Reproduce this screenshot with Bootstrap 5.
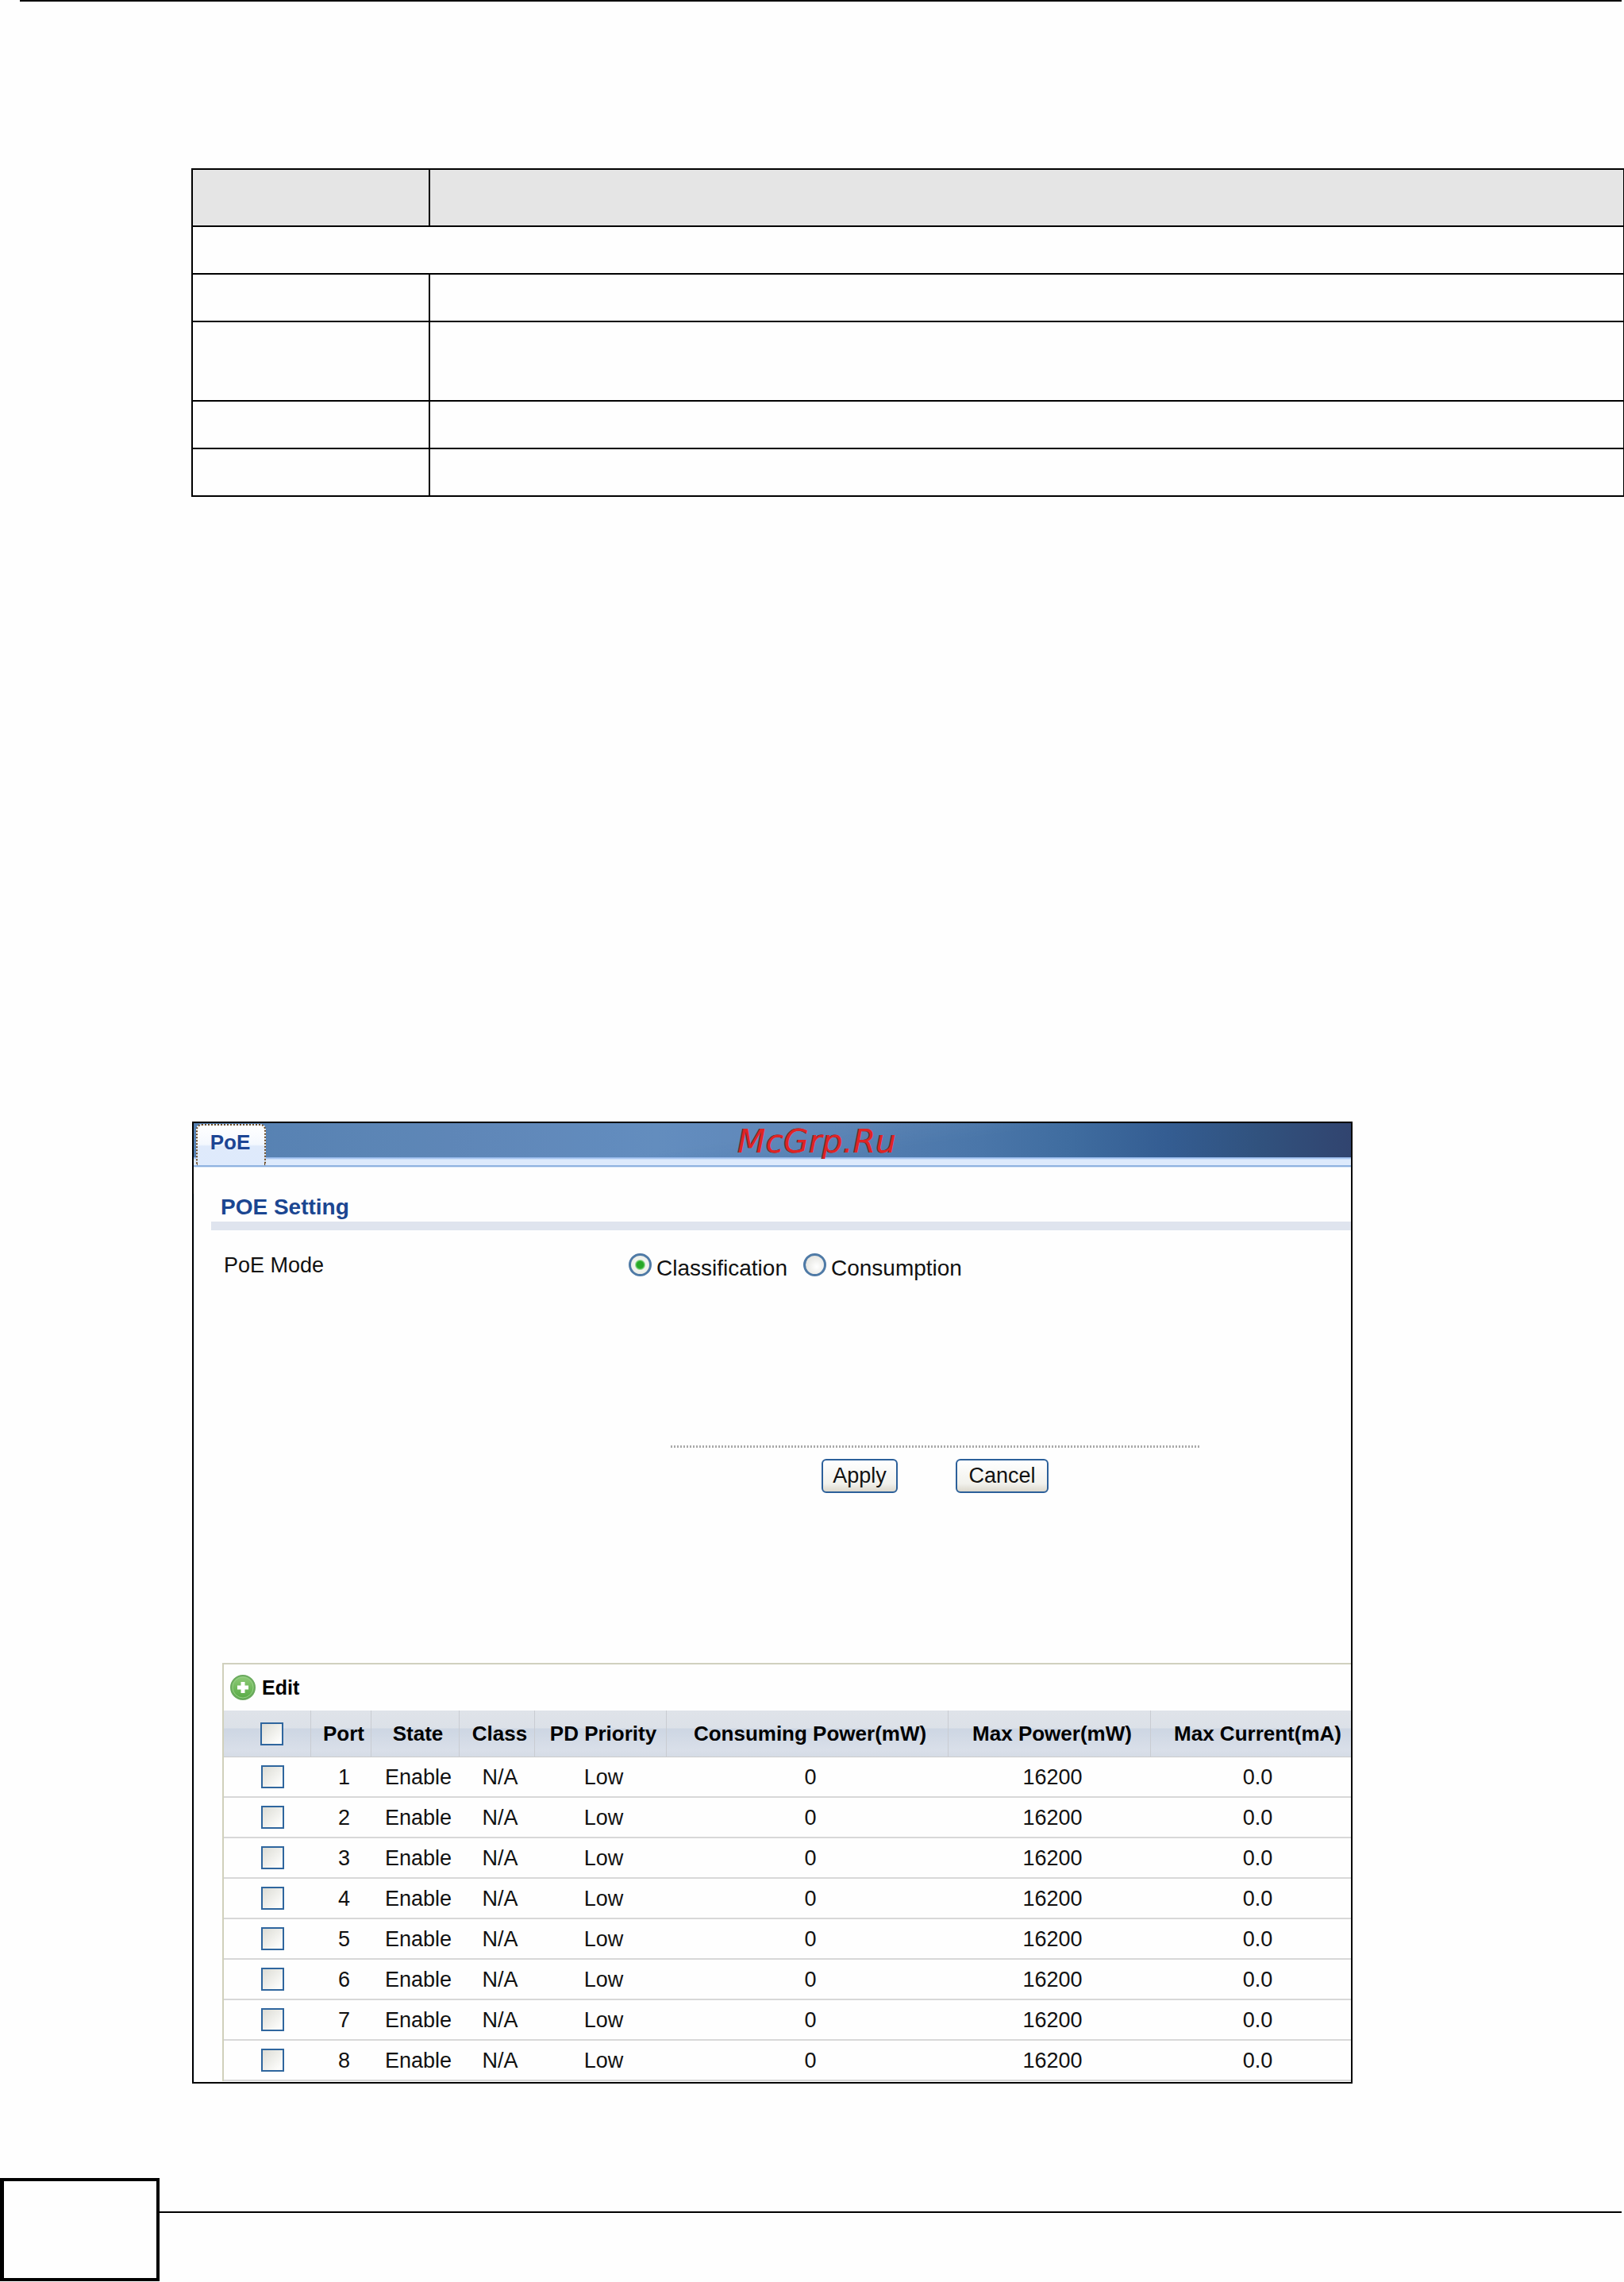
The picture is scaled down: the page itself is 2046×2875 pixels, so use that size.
<!DOCTYPE html>
<html lang="en">
<head>
<meta charset="utf-8">
<meta name="viewport" content="width=device-width, initial-scale=1">
<title>PoE</title>
<link href="https://cdn.jsdelivr.net/npm/bootstrap@5.3.0/dist/css/bootstrap.min.css" rel="stylesheet">
<style>
  body { background: #fefefe; color: #111; font-family: "Liberation Sans", Arial, sans-serif; font-size: 27px; line-height: 32px; overflow-x: hidden; }
  .page-rule { height: 2px; background: #000; margin: 0 3px 0 25px; }

  .sheet { padding-left: 241px; }
  .desc-table { border-collapse: separate; border-spacing: 0; table-layout: fixed; border-left: 2px solid #000; border-right: 1px solid #000; border-top: 2px solid #000; margin: 210px 0 787px; }
  .desc-table td, .desc-table th { padding: 0; height: 60px; border-bottom: 2px solid #000; }
  .desc-table th { height: 72px; background: #e5e5e5; }
  .desc-table .split { border-right: 2px solid #000; }
  .desc-table .tall td { height: 100px; }
  .desc-table col:first-child { width: 299px; }

  .panel { width: 81%; margin-left: 1px; border: 2px solid #000; overflow: hidden; }
  .panel-top {
    height: 56px; padding: 1px 0 0 3px; color: #1d4594;
    background:
      linear-gradient(180deg, transparent 43px, #8db2e8 43px, #b5d0f5 45px, #ddeafc 46px, #ddeafc 53px, #8fb3e0 53px, #8fb3e0 55px, #dce8f7 55px),
      linear-gradient(172deg, rgba(255,255,255,.05) 0 45%, transparent 60%),
      linear-gradient(90deg, #4c79ad 0, #5580b3 22%, #5b87bb 40%, #557fb2 56%, #4a76a9 68%, #3f6c9f 76%, #345d92 84%, #31527e 92%, #31446f 100%);
  }
  .tab-link { height: 52px; width: 88px; padding-right: 2px; border: 2px dotted #6b4a24; border-bottom: 0; border-radius: 7px 7px 0 0; background: linear-gradient(180deg, #fff 0, #f4f8fe 48%, #dfeafb 52%, #deeafc 100%); color: #1d4594; font-size: 26px; line-height: 42px; font-weight: 700; }
  .watermark { left: 47%; top: -2px; color: #df2424; font: italic 41px/50px "DejaVu Sans", sans-serif; text-shadow: -1px 0 0 #5a3040; }
  .panel-body { border-left: 1px solid #dce6f6; padding: 0 0 1px 21px; }
  .section-title { margin: 33px 0 28px; padding: 0 0 1px 12px; border-bottom: 11px solid #dfe4ee; color: #1b4691; font-size: 28px; line-height: 34px; font-weight: 700; }
  .mode-row { padding-left: 16px; min-height: 36px; }
  .mode-name { width: 510px; }
  .mode-choice { gap: 6px; font-size: 28px; }
  .mode-choice label { padding-top: 4px; }
  .mode-list { gap: 20px; }
  .xp-radio { width: 29px; height: 29px; margin: 1px 0 0; border: 3px solid #4f7aa6; background: radial-gradient(circle at 60% 60%, #fff, #dcdcd6); flex: none; }
  .xp-radio:checked { background: radial-gradient(circle, #27a827 0 4px, #4cc04c 5px, #f3f5f0 7px, #e6e7e0 100%); border-color: #4f7aa6; }
  .actions { width: 666px; margin: 207px 0 214px 579px; }
  .dot-line { height: 3px; background: repeating-linear-gradient(90deg, #aaa 0 2px, transparent 2px 4px); }
  .action-buttons { gap: 73px; padding-top: 14px; }
  .xp-btn { height: 43px; padding: 0; border: 2px solid #2c609a; border-radius: 6px; background: linear-gradient(180deg, #fff, #f1f1ec 75%, #dcd8cc); color: #111; font-size: 27px; line-height: 39px; }
  .btn-apply { width: 96px; }
  .btn-cancel { width: 117px; }

  .grid-box { margin-left: 14px; border-top: 2px solid #d0d0bf; border-left: 2px solid #d0d0bb; }
  .tool-row { height: 58px; padding-left: 8px; }
  .edit-btn { gap: 8px; background: none; border: 0; padding: 0; font-size: 25px; line-height: 32px; font-weight: 700; color: #000; }
  .port-table { table-layout: fixed; text-align: center; color: #111; border-collapse: separate; border-spacing: 0; }
  .port-table th { height: 59px; padding: 0 0 0 7px; color: #000; font-size: 26px; line-height: 32px; white-space: nowrap; vertical-align: middle; border-right: 1px solid #c9ccd2; border-bottom: 1px solid #ccc;
    background: linear-gradient(180deg, #dfe3e9 0, #dce1e8 22px, #cdd6e3 23px, #d9dfe9 50px, #d5dce6 100%); }
  .port-table td { height: 51px; padding: 0 0 0 7px; border-bottom: 2px solid #d8d8d8; vertical-align: middle; }
  .port-table th:last-child { border-right: 0; }
  .port-table tr > :last-child { padding-left: 17px; }
  .port-table tr > :first-child { padding-left: 12px; }
  .c-check { width: 110px; } .c-port { width: 76px; } .c-state { width: 111px; } .c-class { width: 95px; }
  .c-prio { width: 166px; } .c-cons { width: 355px; } .c-max { width: 255px; }
  .xp-check.form-check-input { display: block; width: 29px; height: 29px; margin: 0 auto; border: 2px solid #2f669e; border-radius: 0; background: linear-gradient(135deg, #dcdcd5, #fcfcfa 85%); }

  .foot-box { width: 201px; height: 130px; border: 4px solid #000; border-left-width: 5px; }
  .foot-line { height: 2px; background: #000; margin: 42px 3px 0 0; }
  .foot { margin-top: 119px; }
</style>
<script src="https://cdn.jsdelivr.net/npm/bootstrap@5.3.0/dist/js/bootstrap.bundle.min.js"></script>
</head>
<body>
<div class="page-rule"></div>
<main class="sheet">
  <table class="desc-table w-100">
    <colgroup><col><col></colgroup>
    <thead><tr><th class="split"></th><th></th></tr></thead>
    <tbody>
      <tr><td colspan="2"></td></tr>
      <tr><td class="split"></td><td></td></tr>
      <tr class="tall"><td class="split"></td><td></td></tr>
      <tr><td class="split"></td><td></td></tr>
      <tr><td class="split"></td><td></td></tr>
    </tbody>
  </table>

  <section class="panel">
    <div class="panel-top position-relative d-flex align-items-start">
      <a class="tab-link d-block text-center text-decoration-none" href="#poe">PoE</a>
      <span class="watermark position-absolute">McGrp.Ru</span>
    </div>
    <div class="panel-body" id="poe">
      <h1 class="section-title">POE Setting</h1>
      <div class="mode-row d-flex align-items-start" role="radiogroup" aria-labelledby="mode-name">
        <span class="mode-name" id="mode-name">PoE Mode</span>
        <div class="mode-list d-flex">
          <div class="mode-choice d-flex align-items-start">
            <input class="form-check-input xp-radio" type="radio" name="mode" id="m1" checked><label for="m1">Classification</label>
          </div>
          <div class="mode-choice d-flex align-items-start">
            <input class="form-check-input xp-radio" type="radio" name="mode" id="m2"><label for="m2">Consumption</label>
          </div>
        </div>
      </div>
      <div class="actions">
        <div class="dot-line"></div>
        <div class="action-buttons d-flex justify-content-center">
          <button type="button" class="btn xp-btn btn-apply">Apply</button>
          <button type="button" class="btn xp-btn btn-cancel">Cancel</button>
        </div>
      </div>
      <div class="grid-box">
        <div class="tool-row d-flex align-items-center">
          <button type="button" class="edit-btn d-flex align-items-center">
            <svg width="32" height="32" viewBox="0 0 32 32" aria-hidden="true">
              <defs><linearGradient id="g" x1="0" y1="0" x2="0" y2="1"><stop offset="0" stop-color="#8fcb78"/><stop offset="1" stop-color="#56a944"/></linearGradient></defs>
              <circle cx="16" cy="16" r="15" fill="url(#g)" stroke="#6aa95e" stroke-width="2"/>
              <circle cx="16" cy="16" r="13" fill="none" stroke="#96cf86" stroke-width="1"/>
              <path d="M13.500 9h5v4.500h4.500v5h-4.500v4.500h-5v-4.500h-4.500v-5h4.500z" fill="#fff"/>
            </svg>
            Edit
          </button>
        </div>
        <table class="port-table w-100">
          <colgroup><col class="c-check"><col class="c-port"><col class="c-state"><col class="c-class"><col class="c-prio"><col class="c-cons"><col class="c-max"><col></colgroup>
          <thead>
            <tr><th><input class="form-check-input xp-check" type="checkbox" aria-label="All ports"></th><th>Port</th><th>State</th><th>Class</th><th>PD Priority</th><th>Consuming Power(mW)</th><th>Max Power(mW)</th><th>Max Current(mA)</th></tr>
          </thead>
          <tbody>
            <tr><td><input class="form-check-input xp-check" type="checkbox" aria-label="Port 1"></td><td>1</td><td>Enable</td><td>N/A</td><td>Low</td><td>0</td><td>16200</td><td>0.0</td></tr>
            <tr><td><input class="form-check-input xp-check" type="checkbox" aria-label="Port 2"></td><td>2</td><td>Enable</td><td>N/A</td><td>Low</td><td>0</td><td>16200</td><td>0.0</td></tr>
            <tr><td><input class="form-check-input xp-check" type="checkbox" aria-label="Port 3"></td><td>3</td><td>Enable</td><td>N/A</td><td>Low</td><td>0</td><td>16200</td><td>0.0</td></tr>
            <tr><td><input class="form-check-input xp-check" type="checkbox" aria-label="Port 4"></td><td>4</td><td>Enable</td><td>N/A</td><td>Low</td><td>0</td><td>16200</td><td>0.0</td></tr>
            <tr><td><input class="form-check-input xp-check" type="checkbox" aria-label="Port 5"></td><td>5</td><td>Enable</td><td>N/A</td><td>Low</td><td>0</td><td>16200</td><td>0.0</td></tr>
            <tr><td><input class="form-check-input xp-check" type="checkbox" aria-label="Port 6"></td><td>6</td><td>Enable</td><td>N/A</td><td>Low</td><td>0</td><td>16200</td><td>0.0</td></tr>
            <tr><td><input class="form-check-input xp-check" type="checkbox" aria-label="Port 7"></td><td>7</td><td>Enable</td><td>N/A</td><td>Low</td><td>0</td><td>16200</td><td>0.0</td></tr>
            <tr><td><input class="form-check-input xp-check" type="checkbox" aria-label="Port 8"></td><td>8</td><td>Enable</td><td>N/A</td><td>Low</td><td>0</td><td>16200</td><td>0.0</td></tr>
          </tbody>
        </table>
      </div>
    </div>
  </section>
</main>
<footer class="foot d-flex align-items-start">
  <div class="foot-box flex-shrink-0"></div>
  <div class="foot-line flex-grow-1"></div>
</footer>
</body>
</html>
